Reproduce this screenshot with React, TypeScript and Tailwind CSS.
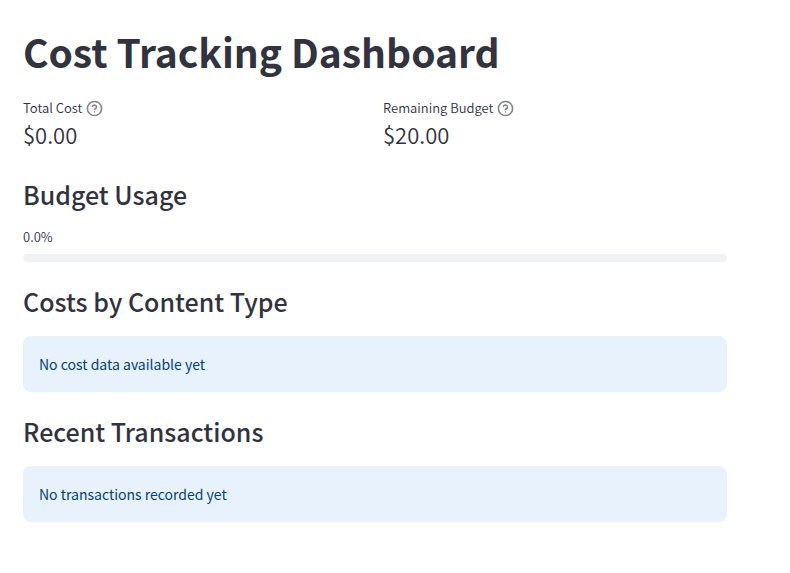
import React from "react";

const font = "font-['Noto_Sans_CJK_SC',sans-serif]";

function HelpIcon() {
  return (
    <svg viewBox="0 0 24 24" className="size-[17px]" fill="none" stroke="#83858d" strokeWidth="2.2" strokeLinecap="round" strokeLinejoin="round" aria-hidden="true">
      <circle cx="12" cy="12" r="10" />
      <path d="M9.09 9a3 3 0 0 1 5.83 1c0 2-3 3-3 3" />
      <path d="M12 17h.01" />
    </svg>
  );
}

function Metric({ label, value }: { label: string; value: string }) {
  return (
    <div className="flex-1">
      <div className="flex h-6 items-center gap-1 text-[13px] font-[350]">
        <span>{label}</span>
        <button type="button" aria-label={`Help for ${label}`}>
          <HelpIcon />
        </button>
      </div>
      <div className="text-[22px] leading-7 font-[350]">{value}</div>
    </div>
  );
}

function Section({ title, children }: { title: string; children: React.ReactNode }) {
  return (
    <section className="mt-[23px]">
      <h2 className="pb-[19px] text-[25px] leading-8 font-medium">{title}</h2>
      {children}
    </section>
  );
}

function Notice({ children }: { children: React.ReactNode }) {
  return <p className="rounded-lg bg-[#e8f2fc] p-4 text-[14px] leading-6 text-[#004280]">{children}</p>;
}

export default function App() {
  return (
    <main className={`${font} mr-[63px] ml-[23px] pt-6 text-[#31333f]`}>
      <h1 className="text-[39px] leading-[54px] font-bold">Cost Tracking Dashboard</h1>
      <div className="mt-[18px] flex gap-4 pb-[7px]">
        <Metric label="Total Cost" value="$0.00" />
        <Metric label="Remaining Budget" value="$20.00" />
      </div>
      <Section title="Budget Usage">
        <p className="text-[13px] leading-4 font-[350]">0.0%</p>
        <div role="progressbar" aria-valuenow={0} aria-valuemin={0} aria-valuemax={100} aria-label="Budget usage" className="mt-[9px] h-2 rounded bg-[#f0f2f6]" />
      </Section>
      <Section title="Costs by Content Type">
        <Notice>No cost data available yet</Notice>
      </Section>
      <Section title="Recent Transactions">
        <Notice>No transactions recorded yet</Notice>
      </Section>
    </main>
  );
}
